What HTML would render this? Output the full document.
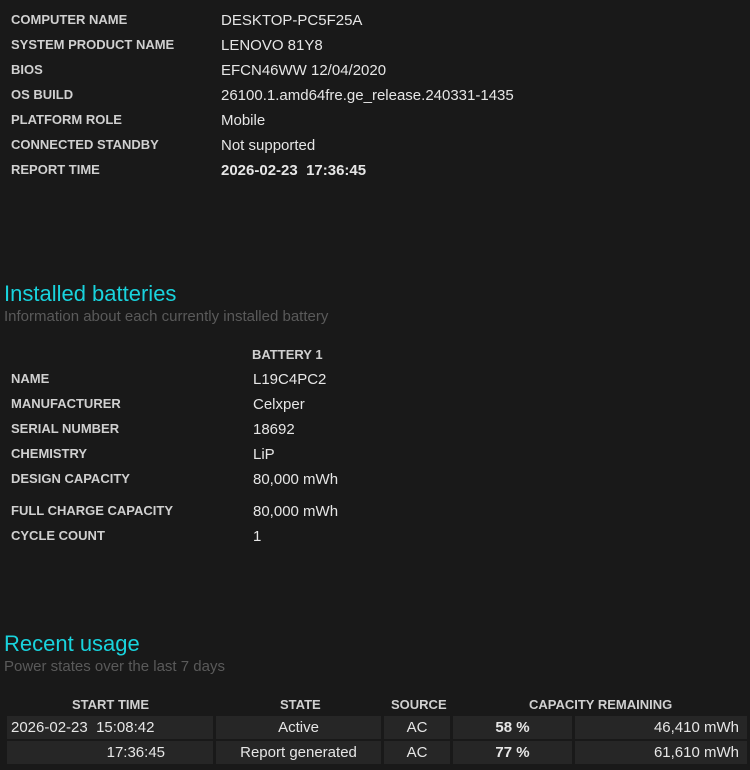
<!DOCTYPE html>
<html><head><style>
body{margin:0;width:750px;height:770px;background:#191919;font-family:"Liberation Sans",sans-serif;color:#e6e6e6;position:relative;overflow:hidden}
.a{position:absolute;white-space:nowrap}
.l{font-size:13px;font-weight:bold;color:#d0d0d0}
.v{font-size:15px;color:#e6e6e6;margin-top:2px}
h2{position:absolute;margin:0;font-size:22px;font-weight:normal;color:#19d3dd}
.s{font-size:15px;color:#5a5a5a}
.c{position:absolute;background:#262626;font-size:15px;height:23px;line-height:23px;color:#e6e6e6}
</style></head><body>
<div class="a l" style="left:11px;top:12px">COMPUTER NAME</div><div class="a v" style="left:221px;top:10px">DESKTOP-PC5F25A</div>
<div class="a l" style="left:11px;top:37px">SYSTEM PRODUCT NAME</div><div class="a v" style="left:221px;top:35px">LENOVO 81Y8</div>
<div class="a l" style="left:11px;top:62px">BIOS</div><div class="a v" style="left:221px;top:60px">EFCN46WW 12/04/2020</div>
<div class="a l" style="left:11px;top:87px">OS BUILD</div><div class="a v" style="left:221px;top:85px">26100.1.amd64fre.ge_release.240331-1435</div>
<div class="a l" style="left:11px;top:112px">PLATFORM ROLE</div><div class="a v" style="left:221px;top:110px">Mobile</div>
<div class="a l" style="left:11px;top:137px">CONNECTED STANDBY</div><div class="a v" style="left:221px;top:135px">Not supported</div>
<div class="a l" style="left:11px;top:162px">REPORT TIME</div><div class="a v" style="left:221px;top:160px;font-weight:bold">2026-02-23&nbsp; 17:36:45</div>

<h2 style="left:4px;top:281px">Installed batteries</h2>
<div class="a s" style="left:4px;top:308px">Information about each currently installed battery</div>
<div class="a l" style="left:252px;top:347px">BATTERY 1</div>
<div class="a l" style="left:11px;top:371px">NAME</div><div class="a v" style="left:253px;top:369px">L19C4PC2</div>
<div class="a l" style="left:11px;top:396px">MANUFACTURER</div><div class="a v" style="left:253px;top:394px">Celxper</div>
<div class="a l" style="left:11px;top:421px">SERIAL NUMBER</div><div class="a v" style="left:253px;top:419px">18692</div>
<div class="a l" style="left:11px;top:446px">CHEMISTRY</div><div class="a v" style="left:253px;top:444px">LiP</div>
<div class="a l" style="left:11px;top:471px">DESIGN CAPACITY</div><div class="a v" style="left:253px;top:469px">80,000 mWh</div>
<div class="a l" style="left:11px;top:503px">FULL CHARGE CAPACITY</div><div class="a v" style="left:253px;top:501px">80,000 mWh</div>
<div class="a l" style="left:11px;top:528px">CYCLE COUNT</div><div class="a v" style="left:253px;top:526px">1</div>

<h2 style="left:4px;top:631px">Recent usage</h2>
<div class="a s" style="left:4px;top:658px">Power states over the last 7 days</div>
<div class="a l" style="left:72px;top:697px">START TIME</div>
<div class="a l" style="left:280px;top:697px">STATE</div>
<div class="a l" style="left:391px;top:697px">SOURCE</div>
<div class="a l" style="left:529px;top:697px">CAPACITY REMAINING</div>

<div class="c" style="left:7px;top:716px;width:202px;padding-left:4px">2026-02-23&nbsp; 15:08:42</div>
<div class="c" style="left:216px;top:716px;width:165px;text-align:center">Active</div>
<div class="c" style="left:384px;top:716px;width:66px;text-align:center">AC</div>
<div class="c" style="left:453px;top:716px;width:119px;text-align:center;font-weight:bold">58 %</div>
<div class="c" style="left:575px;top:716px;width:164px;text-align:right;padding-right:8px">46,410 mWh</div>

<div class="c" style="left:7px;top:741px;width:158px;text-align:right;padding-right:48px">17:36:45</div>
<div class="c" style="left:216px;top:741px;width:165px;text-align:center">Report generated</div>
<div class="c" style="left:384px;top:741px;width:66px;text-align:center">AC</div>
<div class="c" style="left:453px;top:741px;width:119px;text-align:center;font-weight:bold">77 %</div>
<div class="c" style="left:575px;top:741px;width:164px;text-align:right;padding-right:8px">61,610 mWh</div>
</body></html>
